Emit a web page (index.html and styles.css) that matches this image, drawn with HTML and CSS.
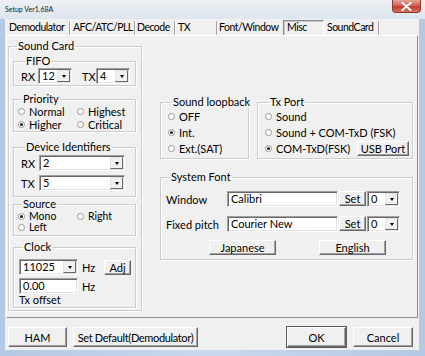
FILE: index.html
```html
<!DOCTYPE html>
<html lang="en">
<head>
  <meta charset="UTF-8">
  <title>Setup Ver1.68A</title>
  <link rel="stylesheet" href="styles.css">
</head>
<body>

  <div class="window">
    <div class="titlebar">
      <span class="title">Setup Ver1.68A</span>
      <div class="close-btn">
        <svg width="11" height="9" viewBox="0 0 11 9">
          <path d="M1.5 1 L9.5 8 M9.5 1 L1.5 8" stroke="#fff" stroke-width="2.2" stroke-linecap="round"/>
        </svg>
      </div>
    </div>

    <div class="frame">
      <div class="client">
        <div class="tabs">
          <div class="tab tab-demod">Demodulator</div>
          <div class="tab tab-afc">AFC/ATC/PLL</div>
          <div class="tab tab-decode">Decode</div>
          <div class="tab tab-tx">TX</div>
          <div class="tab tab-font">Font/Window</div>
          <div class="tab tab-misc active">Misc</div>
          <div class="tab tab-sound">SoundCard</div>
        </div>

        <div class="page">
          <fieldset class="group sound-card">
            <legend>Sound Card</legend>

            <fieldset class="group fifo">
              <legend>FIFO</legend>
              <div class="fifo-row">
                <span class="fifo-rx">RX</span>
                <div class="combo combo-fifo"><span class="val">12</span><span class="drop"></span></div>
                <span class="fifo-tx">TX</span>
                <div class="combo combo-fifo"><span class="val">4</span><span class="drop"></span></div>
              </div>
            </fieldset>

            <fieldset class="group priority">
              <legend>Priority</legend>
              <div class="radio-grid">
                <label class="radio"><span class="dot"></span>Normal</label>
                <label class="radio"><span class="dot"></span>Highest</label>
                <label class="radio checked"><span class="dot"></span>Higher</label>
                <label class="radio"><span class="dot"></span>Critical</label>
              </div>
            </fieldset>

            <fieldset class="group devices">
              <legend>Device Identifiers</legend>
              <div class="dev-row">
                <span class="dev-lbl">RX</span>
                <div class="combo combo-dev"><span class="val">2</span><span class="drop"></span></div>
              </div>
              <div class="dev-row">
                <span class="dev-lbl">TX</span>
                <div class="combo combo-dev"><span class="val">5</span><span class="drop"></span></div>
              </div>
            </fieldset>

            <fieldset class="group source">
              <legend>Source</legend>
              <div class="radio-grid tight">
                <label class="radio checked"><span class="dot"></span>Mono</label>
                <label class="radio"><span class="dot"></span>Right</label>
                <label class="radio"><span class="dot"></span>Left</label>
              </div>
            </fieldset>

            <fieldset class="group clock">
              <legend>Clock</legend>
              <div class="clock-grid">
                <div class="combo combo-clock"><span class="val">11025</span><span class="drop"></span></div>
                <span class="hz">Hz</span>
                <button class="btn btn-adj">Adj</button>
                <div class="edit edit-clock">0.00</div>
                <span class="hz">Hz</span>
              </div>
              <div class="tx-offset">Tx offset</div>
            </fieldset>
          </fieldset>

          <div class="right-col">
            <div class="right-top">
              <fieldset class="group loopback">
                <legend>Sound loopback</legend>
                <label class="radio wide"><span class="dot"></span>OFF</label>
                <label class="radio wide checked"><span class="dot"></span>Int.</label>
                <label class="radio wide"><span class="dot"></span>Ext.(SAT)</label>
              </fieldset>

              <fieldset class="group tx-port">
                <legend>Tx Port</legend>
                <label class="radio wide"><span class="dot"></span>Sound</label>
                <label class="radio wide"><span class="dot"></span>Sound + COM-TxD (FSK)</label>
                <div class="port-row">
                  <label class="radio wide checked"><span class="dot"></span>COM-TxD(FSK)</label>
                  <button class="btn btn-usb">USB Port</button>
                </div>
              </fieldset>
            </div>

            <fieldset class="group sys-font">
              <legend>System Font</legend>
              <div class="font-row">
                <span class="font-lbl">Window</span>
                <div class="edit edit-font">Calibri</div>
                <button class="btn btn-set">Set</button>
                <div class="combo combo-size"><span class="val">0</span><span class="drop"></span></div>
              </div>
              <div class="font-row">
                <span class="font-lbl">Fixed pitch</span>
                <div class="edit edit-font">Courier New</div>
                <button class="btn btn-set">Set</button>
                <div class="combo combo-size"><span class="val">0</span><span class="drop"></span></div>
              </div>
              <div class="lang-row">
                <button class="btn btn-lang">Japanese</button>
                <button class="btn btn-lang">English</button>
              </div>
            </fieldset>
          </div>
        </div>

        <div class="footer">
          <button class="btn btn-ham">HAM</button>
          <button class="btn btn-default">Set Default(Demodulator)</button>
          <span class="spacer"></span>
          <button class="btn btn-ok">OK</button>
          <button class="btn btn-cancel">Cancel</button>
        </div>
      </div>
    </div>
  </div>

</body>
</html>
```

FILE: styles.css
```css
* {
  box-sizing: border-box;
  margin: 0;
  padding: 0;
}

body {
  font-family: 'Lato', 'Open Sans', sans-serif;
  font-size: 11px;
  color: #000;
  background: #fff;
  white-space: nowrap;
}

.window {
  width: 425px;
  height: 356px;
  display: flex;
  flex-direction: column;
  background: #bfd1e8;
}

.titlebar {
  height: 19px;
  display: flex;
  justify-content: space-between;
  background: linear-gradient(#eceff3, #dfe6ef);
}

.title {
  font-size: 7px;
  line-height: 7px;
  margin: 6px 0 0 5px;
  color: #222;
}

.close-btn {
  width: 29px;
  height: 13px;
  margin-right: 4px;
  display: flex;
  align-items: center;
  justify-content: center;
  border: 1px solid #8f3b32;
  border-top: none;
  border-radius: 0 0 4px 4px;
  background: linear-gradient(#e8a499, #d0594b 50%, #c23b2d 55%, #d9725f);
}

.frame {
  flex: 1;
  padding: 0 6px 6px 5px;
  background: linear-gradient(90deg, #b4c9e4, #c9d9ed 50%, #b4c9e4);
}

.client {
  height: 100%;
  background: #f0f0f0;
  display: flex;
  flex-direction: column;
}

/* tabs */
.tabs {
  height: 16px;
  display: flex;
  padding-left: 1px;
}

.tab {
  height: 15px;
  margin-top: 2px;
  line-height: 13px;
  padding-left: 4px;
  font-size: 10.5px;
  letter-spacing: -0.5px;
  border-right: 1px solid #a0a0a0;
  box-shadow: 1px 0 0 #fff;
}

.tab-demod { width: 64px; padding-left: 3px; }
.tab-afc { width: 65px; padding-left: 3px; }
.tab-decode { width: 40px; padding-left: 2px; }
.tab-tx { width: 42px; padding-left: 3px; }
.tab-font { width: 66px; padding-left: 2px; border-right: none; box-shadow: none; }
.tab-sound { width: 55px; padding-left: 3px; }

.tab-misc {
  width: 41px;
  margin-top: 1px;
  height: 16px;
  line-height: 12px;
  padding-left: 3px;
  border: 1px solid #8a8a8a;
  border-right-color: #fff;
  border-bottom-color: #fff;
  box-shadow: inset 1px 1px #c8c8c8;
}

.page {
  flex: none;
  height: 283px;
  margin: 0 1px;
  padding: 4px 0 0 1px;
  border: 1px solid;
  border-color: #fff #8f8f8f #8f8f8f #fff;
  display: flex;
  align-items: flex-start;
  gap: 18px;
}

/* group boxes */
.group {
  border: 1px solid #cdcdcd;
  box-shadow: 1px 1px 0 #fff, inset 1px 1px 0 #fff;
  min-width: 0;
}

.group legend {
  height: 12px;
  line-height: 12px;
  margin-left: 4px;
  padding: 0 1px;
}

.sound-card {
  width: 134px;
  padding: 3px 5px 2px 4px;
}

.fifo {
  padding: 1px 0 1px 7px;
}

.fifo-row {
  display: flex;
  align-items: center;
}

.fifo-rx { width: 17px; }
.fifo-tx { width: 14px; margin-left: 10px; }

.combo {
  height: 16px;
  display: flex;
  background: #fff;
  border: 1px solid;
  border-color: #a0a0a0 #fff #fff #a0a0a0;
  box-shadow: inset 1px 1px #696969, inset -1px -1px #e3e3e3;
}

.combo .val {
  flex: 1;
  padding: 1px 0 0 3px;
  line-height: 12px;
}

.combo .drop {
  width: 13px;
  margin: 1px;
  background: #f0f0f0;
  border: 1px solid;
  border-color: #e3e3e3 #696969 #696969 #e3e3e3;
  display: flex;
  align-items: center;
  justify-content: center;
}

.combo .drop::after {
  content: "";
  border-top: 3px solid #000;
  border-left: 2.5px solid transparent;
  border-right: 2.5px solid transparent;
  margin-top: 1px;
}

.combo-fifo { width: 34px; }
.combo-dev { width: 86px; }
.combo-clock { width: 59px; }
.combo-size { width: 33px; }

.edit {
  height: 16px;
  padding: 1px 0 0 3px;
  line-height: 12px;
  background: #fff;
  border: 1px solid;
  border-color: #a0a0a0 #fff #fff #a0a0a0;
  box-shadow: inset 1px 1px #696969, inset -1px -1px #e3e3e3;
}

.priority {
  margin-top: 7px;
  padding: 0 0 0 4px;
}

.radio-grid {
  display: grid;
  grid-template-columns: 59px 1fr;
  grid-auto-rows: 13px;
}

.radio-grid.tight {
  grid-auto-rows: 11px;
  padding: 1px 0 2px;
  font-size: 10.5px;
}

.radio {
  display: flex;
  align-items: center;
  gap: 4px;
  line-height: 11px;
}

.radio .dot {
  width: 7px;
  height: 7px;
  border-radius: 50%;
  background: #fdfdfd;
  border: 1px solid #9a9a9a;
  display: flex;
  align-items: center;
  justify-content: center;
}

.radio.checked .dot::after {
  content: "";
  width: 3px;
  height: 3px;
  border-radius: 50%;
  background: #222;
}

.devices {
  margin-top: 9px;
  padding: 2px 0 5px 7px;
  display: flex;
  flex-direction: column;
  gap: 4px;
}

.dev-row {
  display: flex;
  align-items: center;
}

.dev-lbl { width: 18px; }

.source {
  margin-top: 1px;
  padding: 0 0 0 4px;
}

.clock {
  margin-top: 5px;
  padding: 6px 0 0 5px;
}

.clock-grid {
  display: grid;
  grid-template-columns: 59px 26px 27px;
  grid-template-rows: 16px 16px;
  row-gap: 3px;
  align-items: center;
}

.hz { padding-left: 4px; }

.edit-clock { width: 59px; }

.tx-offset {
  height: 13px;
  line-height: 12px;
}

/* buttons */
.btn {
  font-family: inherit;
  font-size: 11px;
  color: #000;
  background: #f0f0f0;
  border: 1px solid;
  border-color: #fff #696969 #696969 #fff;
  box-shadow: inset -1px -1px #a0a0a0;
  height: 20px;
  white-space: nowrap;
}

.btn-adj {
  height: 15px;
  width: 27px;
  margin-top: 1px;
}

/* right column */
.right-col {
  margin-top: 56px;
  width: 253px;
  display: flex;
  flex-direction: column;
}

.right-top {
  display: flex;
  gap: 8px;
}

.loopback {
  width: 89px;
  padding: 0 0 2px 7px;
}

.tx-port {
  width: 156px;
  padding: 0 3px 2px 7px;
}

.radio.wide {
  height: 16px;
}

.port-row {
  display: flex;
  justify-content: space-between;
  align-items: center;
  height: 16px;
}

.btn-usb {
  width: 52px;
  height: 15px;
  margin-top: 1px;
}

.sys-font {
  margin-top: 12px;
  padding: 8px 0 4px 5px;
}

.font-row {
  display: flex;
  align-items: center;
  height: 16px;
  margin-bottom: 9px;
}

.font-lbl { width: 61px; }
.edit-font { width: 111px; }

.btn-set {
  width: 27px;
  height: 15px;
  margin: 0 1px 1px 1px;
}

.lang-row {
  display: flex;
  gap: 43px;
  padding-left: 43px;
  margin-top: -1px;
}

.btn-lang {
  width: 67px;
  height: 15px;
}

/* footer */
.footer {
  display: flex;
  align-items: flex-start;
  padding: 9px 6px 0 3px;
}

.spacer { flex: 1; }

.btn-ham { width: 59px; }
.btn-default { width: 125px; margin-left: 6px; letter-spacing: -0.35px; }
.btn-ok { width: 59px; box-shadow: inset -1px -1px #a0a0a0, 0 0 0 1px #5a5a5a; }
.btn-cancel { width: 60px; margin-left: 7px; }
```
